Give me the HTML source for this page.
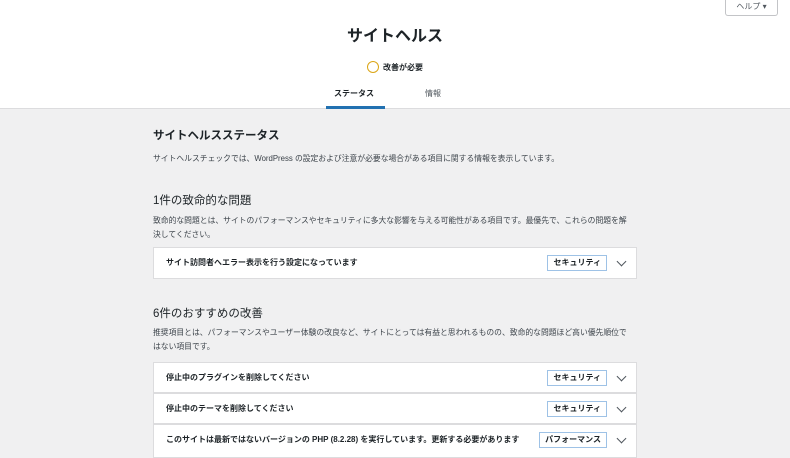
<!DOCTYPE html>
<html><head><meta charset="utf-8"><style>
*{margin:0;padding:0;box-sizing:border-box}
body{width:790px;height:457px;overflow:hidden;background:#f0f0f1;font-family:"Liberation Sans","Noto Sans CJK JP",sans-serif;color:#1d2327;position:relative}
.hdr{position:absolute;left:0;top:0;width:790px;height:109px;background:#fff;border-bottom:1px solid #dcdcde}
.help{position:absolute;left:725px;top:-2px;width:53px;height:18px;border:1px solid #c3c4c7;border-top:none;border-radius:0 0 3px 3px;font-size:8px;color:#50575e;text-align:center;line-height:18px;background:#fff}
.title{position:absolute;left:0;width:790px;top:22px;text-align:center;font-size:16px;font-weight:bold}
.stat{position:absolute;left:367px;top:61px;font-size:8px;font-weight:bold;display:flex;align-items:center}
.stat i{display:inline-block;width:12px;height:12px;border:1.5px solid #dba617;border-radius:50%;margin-right:4px}
.tab{position:absolute;top:88px;font-size:8px;font-weight:bold}
.ul{position:absolute;left:326px;top:106px;width:59px;height:3px;background:#2271b1}
h2{font-size:11.5px;font-weight:normal;position:absolute;left:153px}
h2.b{font-weight:bold}
p{position:absolute;left:153px;width:480px;font-size:7.8px;line-height:14px;color:#3c434a}
.card{position:absolute;left:153px;width:484px;background:#fff;border:1px solid #dcdcde;height:31px}
.card span.t{position:absolute;left:12px;top:9px;font-size:8px;font-weight:bold}
.badge{position:absolute;right:29px;top:7px;height:16px;border:1px solid #9ec2e6;font-size:8px;font-weight:bold;line-height:14px;padding:0 5px}
.chev{position:absolute;right:11px;top:10px;width:7px;height:7px;border-right:1.3px solid #50575e;border-bottom:1.3px solid #50575e;transform:rotate(45deg)}
</style></head><body>
<div class="hdr">
<div class="help">ヘルプ ▾</div>
<div class="title">サイトヘルス</div>
<div class="stat"><i></i>改善が必要</div>
<div class="tab" style="left:334px">ステータス</div>
<div class="tab" style="left:425px;font-weight:normal;color:#50575e">情報</div>
<div class="ul"></div>
</div>
<h2 class="b" style="top:127px">サイトヘルスステータス</h2>
<p style="top:152px">サイトヘルスチェックでは、WordPress の設定および注意が必要な場合がある項目に関する情報を表示しています。</p>
<h2 style="top:192px">1件の致命的な問題</h2>
<p style="top:214px">致命的な問題とは、サイトのパフォーマンスやセキュリティに多大な影響を与える可能性がある項目です。最優先で、これらの問題を解決してください。</p>
<div class="card" style="top:247px;height:32px"><span class="t">サイト訪問者へエラー表示を行う設定になっています</span><span class="badge">セキュリティ</span><i class="chev"></i></div>
<h2 style="top:305px">6件のおすすめの改善</h2>
<p style="top:326px">推奨項目とは、パフォーマンスやユーザー体験の改良など、サイトにとっては有益と思われるものの、致命的な問題ほど高い優先順位ではない項目です。</p>
<div class="card" style="top:362px"><span class="t">停止中のプラグインを削除してください</span><span class="badge">セキュリティ</span><i class="chev"></i></div>
<div class="card" style="top:393px"><span class="t">停止中のテーマを削除してください</span><span class="badge">セキュリティ</span><i class="chev"></i></div>
<div class="card" style="top:424px;height:34px"><span class="t">このサイトは最新ではないバージョンの PHP (8.2.28) を実行しています。更新する必要があります</span><span class="badge">パフォーマンス</span><i class="chev"></i></div>
</body></html>
